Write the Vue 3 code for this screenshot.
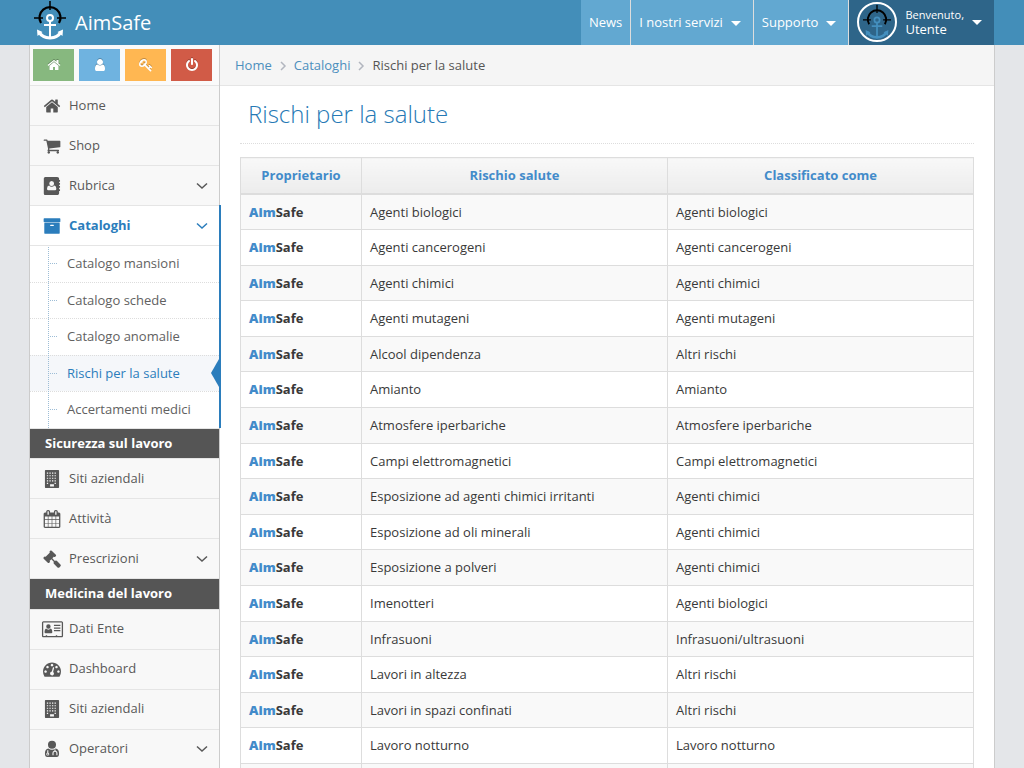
<script setup>
const icons = {
  home: 'M1472 992v480q0 26-19 45t-45 19h-384v-384h-256v384h-384q-26 0-45-19t-19-45v-480q0-1 .5-3t.5-3l575-474 575 474q1 2 1 6zm223-69l-62 74q-8 9-21 11h-3q-13 0-21-7l-692-577-692 577q-12 8-24 7-13-2-21-11l-62-74q-8-10-7-23.5t11-21.5l719-599q32-26 76-26t76 26l244 204v-195q0-14 9-23t23-9h192q14 0 23 9t9 23v408l219 182q10 8 11 21.5t-7 23.5z',
  user: 'M1536 1399q0 109-62.5 187t-150.5 78h-854q-88 0-150.5-78t-62.5-187q0-85 8.5-160.5t31.5-152 58.5-131 94-89 134.5-34.5q131 128 313 128t313-128q76 0 134.5 34.5t94 89 58.5 131 31.5 152 8.5 160.5zm-256-887q0 159-112.5 271.5t-271.5 112.5-271.5-112.5-112.5-271.5 112.5-271.5 271.5-112.5 271.5 112.5 112.5 271.5z',
  key: 'M832 512q0-80-56-136t-136-56-136 56-56 136q0 42 19 83-41-19-83-19-80 0-136 56t-56 136 56 136 136 56 136-56 56-136q0-42-19-83 41 19 83 19 80 0 136-56t56-136zm851 704q0 17-49 66t-66 49q-9 0-28.5-16t-36.5-33-38.5-40-24.5-26l-96 96 220 220q28 28 28 68 0 42-39 81t-81 39q-40 0-68-28l-671-671q-176 131-365 131-163 0-265.5-102.5t-102.5-265.5q0-160 95-313t248-248 313-95q163 0 265.5 102.5t102.5 265.5q0 189-131 365l355 355 96-96q-3-3-26-24.5t-40-38.5-33-36.5-16-28.5q0-17 49-66t66-49q13 0 23 10 6 6 46 44.5t82 79.5 86.5 86 73 78 28.5 41z',
  power: 'M1664 896q0 156-61 298t-164 245-245 164-298 61-298-61-245-164-164-245-61-298q0-182 80.5-343t226.5-270q43-32 95.5-25t83.5 50q32 42 24.5 94.5t-49.5 84.5q-98 74-151.5 181t-53.5 228q0 104 40.5 198.5t109.5 163.5 163.5 109.5 198.5 40.5 198.5-40.5 163.5-109.5 109.5-163.5 40.5-198.5q0-121-53.5-228t-151.5-181q-42-32-49.5-84.5t24.5-94.5q31-43 84-50t95 25q146 109 226.5 270t80.5 343zm-640-768v640q0 52-38 90t-90 38-90-38-38-90v-640q0-52 38-90t90-38 90 38 38 90z',
  cart: 'M704 1536q0 52-38 90t-90 38-90-38-38-90 38-90 90-38 90 38 38 90zm896 0q0 52-38 90t-90 38-90-38-38-90 38-90 90-38 90 38 38 90zm128-1088v512q0 24-16.5 42.5t-40.5 21.5l-1044 122q13 60 13 70 0 16-24 64h920q26 0 45 19t19 45-19 45-45 19h-1024q-26 0-45-19t-19-45q0-11 8-31.5t16-36 21.5-40 15.5-29.5l-177-823h-204q-26 0-45-19t-19-45 19-45 45-19h256q16 0 28.5 6.5t19.5 15.5 13 24.5 8 26 5.5 29.5 4.5 26h1201q26 0 45 19t19 45z',
  book: 'M224 0h1190q76 0 133 50t57 130v110h70q22 0 22 24v130q0 24-22 24h-70v128h70q22 0 22 24v130q0 24-22 24h-70v128h70q22 0 22 24v130q0 24-22 24h-70v128h70q22 0 22 24v130q0 24-22 24h-70v232q0 80-57 130t-133 50h-1190q-60 0-102-42t-42-102v-1504q0-60 42-102t102-42zM864 400a240 250 0 1 0 0 500a240 250 0 1 0 0-500zM600 850q-200 40-200 330 0 150 130 150h668q130 0 130-150 0-290-200-330-100 130-264 130t-264-130z',
  archive: 'M1088 832q0-26-19-45t-45-19h-256q-26 0-45 19t-19 45 19 45 45 19h256q26 0 45-19t19-45zm576-192v960q0 26-19 45t-45 19h-1408q-26 0-45-19t-19-45v-960q0-26 19-45t45-19h1408q26 0 45 19t19 45zm64-448v256q0 26-19 45t-45 19h-1536q-26 0-45-19t-19-45v-256q0-26 19-45t45-19h1536q26 0 45 19t19 45z',
  building: 'M256 0h1280q64 0 64 64v1664q0 64-64 64h-1280q-64 0-64-64v-1664q0-64 64-64zM384 256v110h128v-110zM640 256v110h128v-110zM896 256v110h128v-110zM1152 256v110h128v-110zM384 512v110h128v-110zM640 512v110h128v-110zM896 512v110h128v-110zM1152 512v110h128v-110zM384 768v110h128v-110zM640 768v110h128v-110zM896 768v110h128v-110zM1152 768v110h128v-110zM384 1024v110h128v-110zM640 1024v110h128v-110zM896 1024v110h128v-110zM1152 1024v110h128v-110zM384 1280v110h128v-110zM1152 1280v110h128v-110zM704 1408v240h384v-240z',
  calendar: 'M192 1664h288v-288h-288v288zm352 0h320v-288h-320v288zm-352-352h288v-320h-288v320zm352 0h320v-320h-320v320zm-352-384h288v-288h-288v288zm736 736h320v-288h-320v288zm-384-736h320v-288h-320v288zm768 736h288v-288h-288v288zm-384-352h320v-320h-320v320zm-352-864v-288q0-13-9.5-22.5t-22.5-9.5h-64q-13 0-22.5 9.5t-9.5 22.5v288q0 13 9.5 22.5t22.5 9.5h64q13 0 22.5-9.5t9.5-22.5zm736 864h288v-320h-288v320zm-384-384h320v-288h-320v288zm384 0h288v-288h-288v288zm32-480v-288q0-13-9.5-22.5t-22.5-9.5h-64q-13 0-22.5 9.5t-9.5 22.5v288q0 13 9.5 22.5t22.5 9.5h64q13 0 22.5-9.5t9.5-22.5zm384-64v1280q0 52-38 90t-90 38h-1408q-52 0-90-38t-38-90v-1280q0-52 38-90t90-38h128v-96q0-66 47-113t113-47h64q66 0 113 47t47 113v96h384v-96q0-66 47-113t113-47h64q66 0 113 47t47 113v96h128q52 0 90 38t38 90z',
  gavel: 'M1771 1536q0 53-37 90l-107 108q-39 37-91 37-53 0-90-37l-363-364q-38-36-38-90 0-53 43-96l-256-256-126 126q-14 14-34 14t-34-14q2 2 12.5 12t12.5 13 10 11.5 10 13.5 6 13.5 5.5 16.5 1.5 18q0 38-28 68-3 3-16.5 18t-19 20.5-18.5 16.5-22 15.5-22 9-26 4.5q-40 0-68-28l-408-408q-28-28-28-68 0-13 4.5-26t9-22 15.5-22 16.5-18.5 20.5-19 18-16.5q30-28 68-28 10 0 18 1.5t16.5 5.5 13.5 6 13.5 10 11.5 10 13 12.5 12 12.5q-14-14-14-34t14-34l348-348q14-14 34-14t34 14q-2-2-12.5-12t-12.5-13-10-11.5-10-13.5-6-13.5-5.5-16.5-1.5-18q0-38 28-68 3-3 16.5-18t19-20.5 18.5-16.5 22-15.5 22-9 26-4.5q40 0 68 28l408 408q28 28 28 68 0 13-4.5 26t-9 22-15.5 22-16.5 18.5-20.5 19-18 16.5q-30 28-68 28-10 0-18-1.5t-16.5-5.5-13.5-6-13.5-10-11.5-10-13-12.5-12-12.5q14 14 14 34t-14 34l-126 126 256 256q43-43 96-43 52 0 91 37l363 363q37 39 37 91z',
  card: 'M40 128h1812q60 0 102 42t42 102v1312q0 60-42 102t-102 42h-1812q-60 0-102-42t-42-102v-1312q0-60 42-102t102-42zM24 256v1344h250v-90h140v90h860v-90h140v90h454v-1344zM540 420a220 230 0 1 1 0 460a220 230 0 1 1 0-460zM300 850q100 110 240 110t240-110q150 60 150 340 0 120-110 120h-560q-110 0-110-120 0-280 150-340zM1090 480h640v120h-640zM1090 740h640v120h-640zM1090 1000h640v120h-640z',
  gauge: 'M384 1152q0-53-37.5-90.5t-90.5-37.5-90.5 37.5-37.5 90.5 37.5 90.5 90.5 37.5 90.5-37.5 37.5-90.5zm192-448q0-53-37.5-90.5t-90.5-37.5-90.5 37.5-37.5 90.5 37.5 90.5 90.5 37.5 90.5-37.5 37.5-90.5zm428 481l101-382q6-26-7.5-48.5t-38.5-29.5-48 6.5-30 39.5l-101 382q-60 5-107 43.5t-63 98.5q-20 77 20 146t117 89 146-20 89-117q16-60-6-117t-72-91zm660-33q0-53-37.5-90.5t-90.5-37.5-90.5 37.5-37.5 90.5 37.5 90.5 90.5 37.5 90.5-37.5 37.5-90.5zm-640-640q0-53-37.5-90.5t-90.5-37.5-90.5 37.5-37.5 90.5 37.5 90.5 90.5 37.5 90.5-37.5 37.5-90.5zm448 192q0-53-37.5-90.5t-90.5-37.5-90.5 37.5-37.5 90.5 37.5 90.5 90.5 37.5 90.5-37.5 37.5-90.5zm320 448q0 261-141 483-19 29-54 29h-1402q-35 0-54-29-141-221-141-483 0-182 71-348t191-286 286-191 348-71 348 71 286 191 191 286 71 348z',
  doctor: 'M896 80a400 400 0 1 1 0 800a400 400 0 1 1 0-800zM540 850q150 130 356 130t356-130q348 40 348 500 0 350-240 350h-928q-240 0-240-350 0-460 348-500zM530 1010h-110v260q-90 40-90 140a145 145 0 1 0 290 0q0-100-90-140zM475 1345a65 65 0 1 1 0 130a65 65 0 1 1 0-130zM1140 940v130q-200 30-200 230v220h110v-220q0-120 140-120t140 120v220h110v-220q0-200-190-230v-130z',
}

const shortcuts = [
  { icon: 'home', label: 'Home', tone: 'green' },
  { icon: 'user', label: 'Profilo', tone: 'blue' },
  { icon: 'key', label: 'Password', tone: 'orange' },
  { icon: 'power', label: 'Esci', tone: 'red' },
]

const menu = [
  { icon: 'home', label: 'Home' },
  { icon: 'cart', label: 'Shop' },
  { icon: 'book', label: 'Rubrica', more: true },
  {
    icon: 'archive',
    label: 'Cataloghi',
    more: true,
    open: true,
    children: ['Catalogo mansioni', 'Catalogo schede', 'Catalogo anomalie', 'Rischi per la salute', 'Accertamenti medici'],
  },
  { heading: 'Sicurezza sul lavoro' },
  { icon: 'building', label: 'Siti aziendali' },
  { icon: 'calendar', label: 'Attività' },
  { icon: 'gavel', label: 'Prescrizioni', more: true },
  { heading: 'Medicina del lavoro' },
  { icon: 'card', label: 'Dati Ente' },
  { icon: 'gauge', label: 'Dashboard' },
  { icon: 'building', label: 'Siti aziendali' },
  { icon: 'doctor', label: 'Operatori', more: true },
]
const current = 'Rischi per la salute'

const rows = [
  ['Agenti biologici', 'Agenti biologici'],
  ['Agenti cancerogeni', 'Agenti cancerogeni'],
  ['Agenti chimici', 'Agenti chimici'],
  ['Agenti mutageni', 'Agenti mutageni'],
  ['Alcool dipendenza', 'Altri rischi'],
  ['Amianto', 'Amianto'],
  ['Atmosfere iperbariche', 'Atmosfere iperbariche'],
  ['Campi elettromagnetici', 'Campi elettromagnetici'],
  ['Esposizione ad agenti chimici irritanti', 'Agenti chimici'],
  ['Esposizione ad oli minerali', 'Agenti chimici'],
  ['Esposizione a polveri', 'Agenti chimici'],
  ['Imenotteri', 'Agenti biologici'],
  ['Infrasuoni', 'Infrasuoni/ultrasuoni'],
  ['Lavori in altezza', 'Altri rischi'],
  ['Lavori in spazi confinati', 'Altri rischi'],
  ['Lavoro notturno', 'Lavoro notturno'],
]
</script>

<template>
  <div class="page">
    <header class="navbar">
      <a class="brand" href="#">
        <svg class="logo" viewBox="0 0 34 40" aria-hidden="true">
          <g fill="none" stroke="#000" stroke-width="2.2">
            <path d="M8 22A10.5 10.5 0 1 1 26 22" />
            <path d="M17 0v9M1 17h9M24 17h9" stroke-width="1.5" />
          </g>
          <g fill="none" stroke="#fff" stroke-width="2">
            <circle cx="17" cy="17" r="3" />
            <path d="M17 20v18M11 24h12" />
            <path d="M6 31Q9 36.5 17 37Q25 36.5 28 31" stroke-width="3" />
          </g>
          <path d="M4 28.500l5.500 2.500-5 4zM30 28.500l-5.500 2.500 5 4z" fill="#fff" />
        </svg>
        <span>AimSafe</span>
      </a>
      <nav class="topnav">
        <a href="#">News</a>
        <a href="#">I nostri servizi<i class="caret"></i></a>
        <a href="#">Supporto<i class="caret"></i></a>
        <a class="account" href="#">
          <span class="avatar">
            <svg viewBox="0 0 34 40" aria-hidden="true">
              <g fill="none" stroke="#000" stroke-width="2.2">
                <path d="M8 22A10.5 10.5 0 1 1 26 22" />
                <path d="M17 0v9M1 17h9M24 17h9" stroke-width="1.5" />
              </g>
              <g fill="none" stroke="#448fbe" stroke-width="2">
                <circle cx="17" cy="17" r="3" />
                <path d="M17 20v18M11 24h12" />
                <path d="M6 31Q9 36.5 17 37Q25 36.5 28 31" stroke-width="3" />
              </g>
              <path d="M4 28.500l5.500 2.500-5 4zM30 28.500l-5.500 2.500 5 4z" fill="#448fbe" />
            </svg>
          </span>
          <span class="greeting"><small>Benvenuto,</small>Utente</span>
          <i class="caret"></i>
        </a>
      </nav>
    </header>

    <div class="container">
      <aside class="sidebar">
        <div class="shortcuts">
          <button v-for="s in shortcuts" :key="s.icon" type="button" :class="s.tone" :aria-label="s.label">
            <svg viewBox="0 0 1792 1792" aria-hidden="true"><path :d="icons[s.icon]" /></svg>
          </button>
        </div>
        <ul class="menu">
          <li v-for="(m, i) in menu" :key="i" :class="{ heading: m.heading, open: m.open }">
            <template v-if="m.heading">{{ m.heading }}</template>
            <a v-else class="item" href="#">
              <svg class="icon" viewBox="0 0 1792 1792" aria-hidden="true"><path :d="icons[m.icon]" fill-rule="evenodd" /></svg>
              <span>{{ m.label }}</span>
              <svg v-if="m.more" class="chevron" viewBox="0 0 12 8" aria-hidden="true"><path d="M1 1.500l5 4.500 5-4.500" /></svg>
            </a>
            <ul v-if="m.children" class="submenu">
              <li v-for="c in m.children" :key="c" :class="{ current: c === current }">
                <a href="#">{{ c }}</a>
              </li>
            </ul>
          </li>
        </ul>
      </aside>

      <main class="main">
        <nav class="breadcrumbs">
          <a href="#">Home</a>
          <svg viewBox="0 0 6 8" aria-hidden="true"><path d="M1 0l4 4-4 4" /></svg>
          <a href="#">Cataloghi</a>
          <svg viewBox="0 0 6 8" aria-hidden="true"><path d="M1 0l4 4-4 4" /></svg>
          <span>Rischi per la salute</span>
        </nav>
        <section class="content">
          <h1>Rischi per la salute</h1>
          <table>
            <thead>
              <tr>
                <th class="owner">Proprietario</th>
                <th>Rischio salute</th>
                <th>Classificato come</th>
              </tr>
            </thead>
            <tbody>
              <tr v-for="r in rows" :key="r[0]">
                <td class="own"><b>Aim</b>Safe</td>
                <td>{{ r[0] }}</td>
                <td>{{ r[1] }}</td>
              </tr>
              <tr>
                <td>&nbsp;</td>
                <td></td>
                <td></td>
              </tr>
            </tbody>
          </table>
        </section>
      </main>
    </div>
  </div>
</template>

<style>
body {
  margin: 0;
  background: #e4e6e9;
}
</style>

<style scoped>
.page {
  height: 100vh;
  overflow: hidden;
  display: flex;
  flex-direction: column;
  font-family: "Open Sans", sans-serif;
  font-size: 13px;
  line-height: 1.5;
  color: #393939;
}
a {
  color: inherit;
  text-decoration: none;
}
ul {
  list-style: none;
  margin: 0;
  padding: 0;
}

.navbar {
  flex: none;
  height: 45px;
  padding: 0 30px;
  background: #438eb9;
  color: #fff;
  display: flex;
  justify-content: space-between;
}
.brand {
  display: flex;
  align-items: center;
  gap: 8px;
  padding-left: 3px;
  font-size: 20px;
}
.logo {
  width: 34px;
  height: 40px;
  margin-bottom: 4px;
}
.topnav {
  display: flex;
}
.topnav > a {
  display: flex;
  align-items: center;
  gap: 8px;
  padding: 1px 8px 0;
  background: #62a8d1;
  border-right: 1px solid #ddd;
}
.topnav > .account {
  background: #2e6589;
  border-right: 0;
  padding: 0 12px 1px 8px;
}
.caret {
  border: 5px solid transparent;
  border-top-color: #fff;
  border-bottom: 0;
  margin-right: 4px;
}
.account .caret {
  margin: 0;
}
.avatar {
  box-sizing: border-box;
  width: 40px;
  height: 40px;
  border: 2px solid #fff;
  border-radius: 50%;
  overflow: hidden;
  display: flex;
  justify-content: center;
  align-items: center;
}
.avatar svg {
  width: 30px;
  height: 35px;
}
.greeting {
  line-height: 15px;
}
.greeting small {
  display: block;
  font-size: 11px;
}

.container {
  flex: 1;
  min-height: 0;
  margin: 0 29px;
  background: #fff;
  border: 1px solid #ccc;
  border-width: 0 1px;
  display: flex;
}
.sidebar {
  flex: none;
  width: 189px;
  background: #f8f8f8;
  border-right: 1px solid #ccc;
}
.shortcuts {
  height: 40px;
  background: #fafafa;
  border-bottom: 1px solid #e5e5e5;
  display: flex;
  align-items: center;
  gap: 5px;
  padding: 0 3px;
}
.shortcuts button {
  width: 41px;
  height: 32px;
  border: 0;
  padding: 0;
  display: flex;
  align-items: center;
  justify-content: center;
}
.shortcuts svg {
  width: 14px;
  height: 14px;
  fill: #fff;
  filter: drop-shadow(0 -1px 0 rgba(0, 0, 0, 0.25));
}
.green { background: #87b87f; }
.blue { background: #6fb3e0; }
.orange { background: #ffb752; }
.red { background: #d15b47; }

.menu > li {
  position: relative;
  border-bottom: 1px solid #e5e5e5;
}
.item {
  display: flex;
  align-items: center;
  height: 39px;
  padding: 0 11px 0 13px;
  color: #585858;
}
.item .icon {
  width: 18px;
  height: 18px;
  margin-right: 8px;
  fill: currentColor;
  overflow: visible;
}
.item span {
  flex: 1;
}
.chevron {
  width: 12px;
  height: 8px;
  fill: none;
  stroke: currentColor;
  stroke-width: 1.5;
}
.menu > .heading {
  padding: 5px 15px;
  background: #555;
  color: #fff;
  font-weight: 700;
}
.menu > .open::after {
  content: "";
  position: absolute;
  top: -1px;
  bottom: 0;
  right: -2px;
  width: 2px;
  background: #2b7dbc;
}
.open > .item {
  background: #fff;
  color: #2b7dbc;
  font-weight: 700;
}
.submenu {
  position: relative;
  background: #fff;
  border-top: 1px solid #e5e5e5;
}
.submenu::before {
  content: "";
  position: absolute;
  z-index: 1;
  left: 18px;
  top: 1px;
  bottom: 0;
  border-left: 1px dotted #9dbdd6;
}
.submenu li {
  position: relative;
}
.submenu li + li {
  border-top: 1px dotted #ddd;
}
.submenu li::before {
  content: "";
  position: absolute;
  left: 20px;
  top: 17px;
  width: 7px;
  border-top: 1px dotted #9dbdd6;
}
.submenu a {
  display: block;
  padding: 8px 0 8px 37px;
  color: #616161;
}
.submenu .current {
  background: #f5f7fa;
}
.submenu .current a {
  color: #2b7dbc;
}
.submenu .current::after {
  content: "";
  position: absolute;
  right: 0;
  top: 3px;
  border: 14px solid transparent;
  border-left-width: 0;
  border-right: 8px solid #2b7dbc;
}

.main {
  flex: 1;
  min-width: 0;
}
.breadcrumbs {
  height: 39px;
  background: #f5f5f5;
  border-bottom: 1px solid #e5e5e5;
  padding: 1px 15px 0;
  display: flex;
  align-items: center;
  gap: 8px;
  color: #555;
}
.breadcrumbs a {
  color: #4c8fbd;
}
.breadcrumbs svg {
  width: 6px;
  height: 8px;
  fill: none;
  stroke: #b2b6bf;
  stroke-width: 1.5;
  overflow: visible;
}
.content {
  padding: 8px 20px;
}
h1 {
  margin: 0 0 13px;
  padding: 0 8px 9px;
  border-bottom: 1px dotted #ddd;
  font-size: 24px;
  line-height: 40px;
  font-weight: 300;
  color: #2679b5;
}
table {
  width: 100%;
  table-layout: fixed;
  border-collapse: collapse;
  line-height: 1.43;
}
th,
td {
  border: 1px solid #ddd;
  padding: 8px;
  text-align: left;
}
th {
  border-bottom-width: 2px;
  background: linear-gradient(#f8f8f8, #ececec);
  color: #428bca;
  font-weight: 700;
  text-align: center;
}
.owner {
  width: 104px;
}
tbody tr:nth-child(odd) {
  background: #f9f9f9;
}
.own {
  font-weight: 700;
}
.own b {
  color: #428bca;
}
</style>
